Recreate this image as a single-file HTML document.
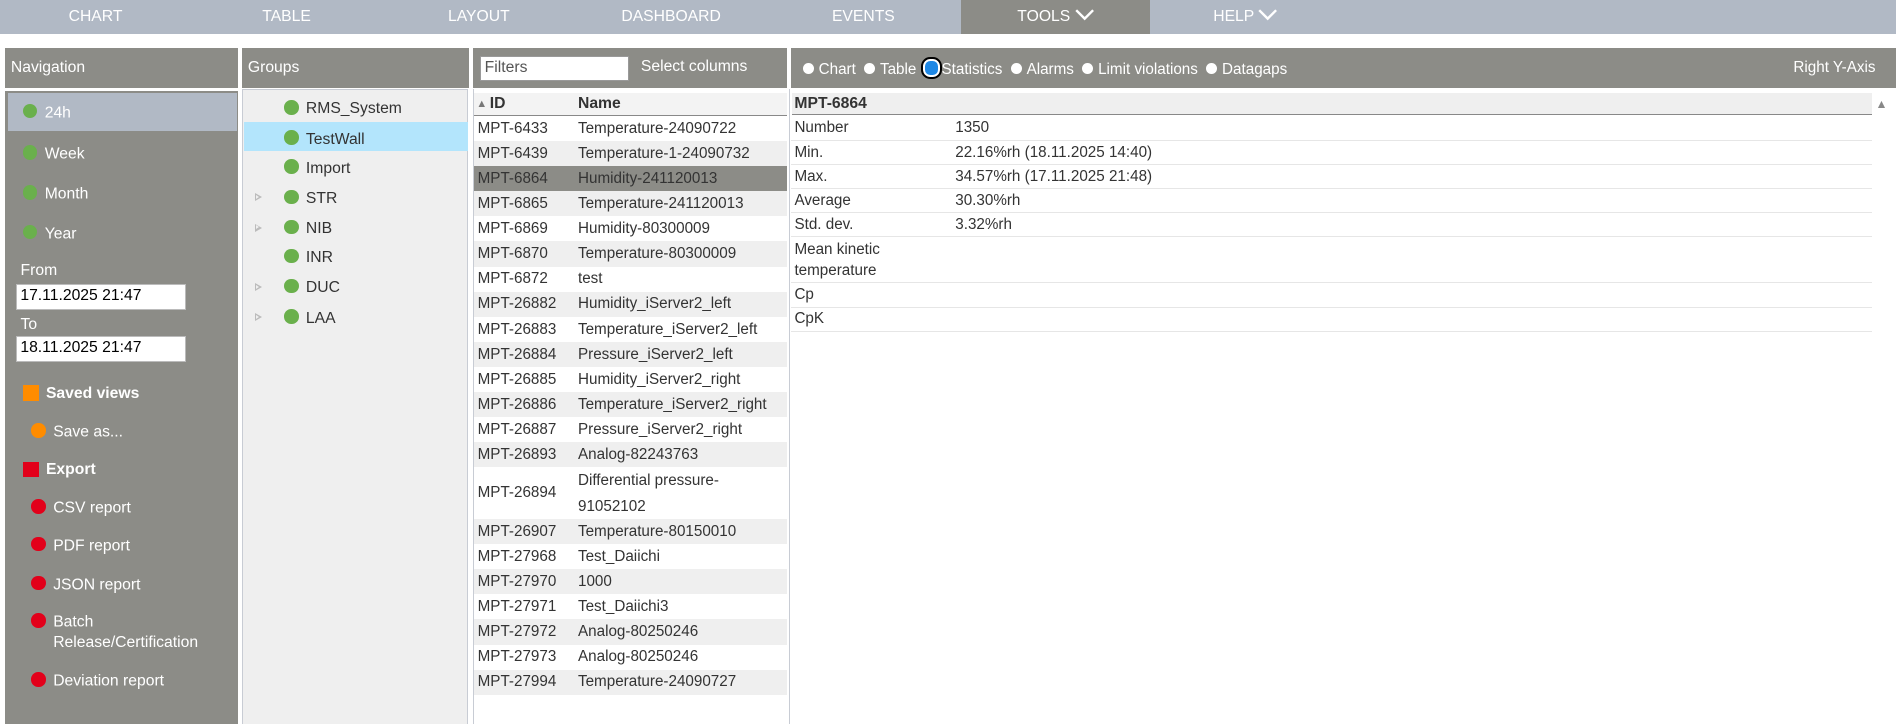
<!DOCTYPE html>
<html><head><meta charset="utf-8"><style>
html,body{margin:0;padding:0;background:#fff;overflow:hidden}
#w{zoom:1.2092;width:1568px;height:599px;position:relative;font-family:"Liberation Sans",sans-serif;font-size:13px;color:#333}
.a{position:absolute}
.nav{left:0;top:0;width:1568px;height:28px;background:#b1b9c5}
.nav div{position:absolute;top:0;height:28px;width:158px;text-align:center;line-height:28px;color:#fff;font-size:13px}
.hd{background:#8c8c87;color:#fff;font-size:13px}
.dot{display:inline-block;width:12px;height:12px;border-radius:50%;background:#6ab04c;vertical-align:-1px;margin-right:6px}
.rd{background:#e2001a}
.ni{position:absolute;left:19px;color:#fff;font-size:13px}
.gi{position:absolute;left:235px;font-size:13px;color:#333;line-height:24px}
.tri{position:absolute;left:211px;width:0;height:0;border-left:6px solid #bbb;border-top:4px solid transparent;border-bottom:4px solid transparent}
.tri:after{content:"";position:absolute;left:-5px;top:-2px;border-left:3px solid #efefef;border-top:2px solid transparent;border-bottom:2px solid transparent}
table{border-collapse:collapse}
.tb td{padding:1px 0 0 3px;height:20.75px;line-height:17px;font-size:12.6px;color:#333;vertical-align:middle;box-sizing:border-box}
.st td{height:20px;border-bottom:1px solid #e6e6e6;padding:1px 0 0 3px;font-size:12.6px;line-height:17px;box-sizing:border-box}
.rb{display:inline-block;width:9px;height:9px;border-radius:50%;background:#fff;margin-right:4px;vertical-align:0}
.inp{background:#fff;border:1px solid #bbb;color:#000;font-size:13px;line-height:18px;padding-left:3px;box-sizing:border-box}
</style></head><body><div id="w">
<div class="a nav">
<div style="left:0">CHART</div><div style="left:158px">TABLE</div><div style="left:317px">LAYOUT</div><div style="left:476px">DASHBOARD</div><div style="left:635px">EVENTS</div>
<div style="left:795px;width:156px;background:#8c8c87">TOOLS <svg width="16" height="10" viewBox="0 0 16 10" style="vertical-align:0"><path d="M1 1l7 7 7-7" stroke="#fff" stroke-width="2" fill="none"/></svg></div>
<div style="left:951px">HELP <svg width="16" height="10" viewBox="0 0 16 10"><path d="M1 1l7 7 7-7" stroke="#fff" stroke-width="2" fill="none"/></svg></div>
</div>

<div class="a hd" style="left:4px;top:40px;width:193px;height:559px"></div>
<div class="a" style="left:4px;top:73px;width:193px;height:2px;background:#fff"></div>
<div class="a" style="left:9px;top:49px;color:#fff">Navigation</div>
<div class="a" style="left:7px;top:77px;width:189px;height:31px;background:#b1b9c5"></div>
<div class="ni" style="top:86px"><span class="dot"></span>24h</div>
<div class="ni" style="top:120px"><span class="dot"></span>Week</div>
<div class="ni" style="top:153px"><span class="dot"></span>Month</div>
<div class="ni" style="top:186px"><span class="dot"></span>Year</div>
<div class="ni" style="left:17px;top:217px">From</div>
<div class="a inp" style="left:13px;top:235px;width:141px;height:21px">17.11.2025 21:47</div>
<div class="ni" style="left:17px;top:261px">To</div>
<div class="a inp" style="left:13px;top:278px;width:141px;height:21px">18.11.2025 21:47</div>
<div class="ni" style="top:318px;font-weight:bold"><span style="display:inline-block;width:13px;height:13px;background:#ff8c00;vertical-align:-3px;margin-right:6px"></span>Saved views</div>
<div class="ni" style="left:26px;top:350px"><span class="dot" style="background:#ff8c00"></span>Save as...</div>
<div class="ni" style="top:381px;font-weight:bold"><span style="display:inline-block;width:13px;height:13px;background:#e2001a;vertical-align:-3px;margin-right:6px"></span>Export</div>
<div class="ni" style="left:26px;top:413px"><span class="dot rd"></span>CSV report</div>
<div class="ni" style="left:26px;top:444px"><span class="dot rd"></span>PDF report</div>
<div class="ni" style="left:26px;top:476px"><span class="dot rd"></span>JSON report</div>
<div class="ni" style="left:26px;top:507px"><span class="dot rd"></span>Batch</div>
<div class="ni" style="left:44px;top:524px">Release/Certification</div>
<div class="ni" style="left:26px;top:556px"><span class="dot rd"></span>Deviation report</div>

<div class="a hd" style="left:200px;top:40px;width:188px;height:33px"></div>
<div class="a" style="left:205px;top:49px;color:#fff">Groups</div>
<div class="a" style="left:200px;top:74px;width:187px;height:525px;background:#efefef;border:1px solid #c8ccd4;border-bottom:none;box-sizing:border-box"></div>
<div class="a" style="left:202px;top:101px;width:185px;height:24px;background:#b3e5fc"></div>
<div class="gi" style="top:78px"><span class="dot"></span>RMS_System</div>
<div class="gi" style="top:103px"><span class="dot"></span>TestWall</div>
<div class="gi" style="top:127px"><span class="dot"></span>Import</div>
<div class="tri" style="top:160px"></div><div class="gi" style="top:152px"><span class="dot"></span>STR</div>
<div class="tri" style="top:185px"></div><div class="gi" style="top:177px"><span class="dot"></span>NIB</div>
<div class="gi" style="top:201px"><span class="dot"></span>INR</div>
<div class="tri" style="top:234px"></div><div class="gi" style="top:226px"><span class="dot"></span>DUC</div>
<div class="tri" style="top:259px"></div><div class="gi" style="top:251px"><span class="dot"></span>LAA</div>

<div class="a hd" style="left:391px;top:40px;width:260px;height:33px"></div>
<div class="a inp" style="left:397px;top:46px;width:123px;height:21px;color:#555;border-color:#999">Filters</div>
<div class="a" style="left:530px;top:48px;color:#fff">Select columns</div>
<div class="a" style="left:391px;top:74px;width:262px;height:525px;border-left:1px solid #c8ccd4;border-right:1px solid #c8ccd4;box-sizing:border-box"></div>
<div class="a" style="left:392px;top:77px;width:259px;height:18px;border-bottom:1px solid #888;background:#f3f3f3;font-weight:bold;font-size:13px;line-height:19px">
<span style="position:absolute;left:2px;font-size:9px;color:#777">&#9650;</span><span style="position:absolute;left:13px">ID</span><span style="position:absolute;left:86px">Name</span></div>
<table class="tb a" style="left:392px;top:96px;width:259px">
<col style="width:83px"><col>
<tr style="background:#fff"><td>MPT-6433</td><td>Temperature-24090722</td></tr>
<tr style="background:#efefef"><td>MPT-6439</td><td>Temperature-1-24090732</td></tr>
<tr style="background:#8c8c87"><td>MPT-6864</td><td>Humidity-241120013</td></tr>
<tr style="background:#efefef"><td>MPT-6865</td><td>Temperature-241120013</td></tr>
<tr style="background:#fff"><td>MPT-6869</td><td>Humidity-80300009</td></tr>
<tr style="background:#efefef"><td>MPT-6870</td><td>Temperature-80300009</td></tr>
<tr style="background:#fff"><td>MPT-6872</td><td>test</td></tr>
<tr style="background:#efefef"><td>MPT-26882</td><td>Humidity_iServer2_left</td></tr>
<tr style="background:#fff"><td>MPT-26883</td><td>Temperature_iServer2_left</td></tr>
<tr style="background:#efefef"><td>MPT-26884</td><td>Pressure_iServer2_left</td></tr>
<tr style="background:#fff"><td>MPT-26885</td><td>Humidity_iServer2_right</td></tr>
<tr style="background:#efefef"><td>MPT-26886</td><td>Temperature_iServer2_right</td></tr>
<tr style="background:#fff"><td>MPT-26887</td><td>Pressure_iServer2_right</td></tr>
<tr style="background:#efefef"><td>MPT-26893</td><td>Analog-82243763</td></tr>
<tr style="background:#fff"><td style="height:39px">MPT-26894</td><td style="line-height:21px">Differential pressure-<br>91052102</td></tr>
<tr style="background:#efefef"><td>MPT-26907</td><td>Temperature-80150010</td></tr>
<tr style="background:#fff"><td>MPT-27968</td><td>Test_Daiichi</td></tr>
<tr style="background:#efefef"><td>MPT-27970</td><td>1000</td></tr>
<tr style="background:#fff"><td>MPT-27971</td><td>Test_Daiichi3</td></tr>
<tr style="background:#efefef"><td>MPT-27972</td><td>Analog-80250246</td></tr>
<tr style="background:#fff"><td>MPT-27973</td><td>Analog-80250246</td></tr>
<tr style="background:#efefef"><td>MPT-27994</td><td>Temperature-24090727</td></tr>
</table>

<div class="a hd" style="left:654px;top:40px;width:914px;height:33px"></div>
<div class="a" style="left:664px;top:49px;color:#fff;white-space:nowrap;font-size:12.6px">
<span class="rb"></span>Chart&nbsp; <span class="rb"></span>Table <span style="display:inline-block;width:11px;height:11px;border-radius:50%;background:#1e88e5;border:2px solid #fff;outline:2px solid #000;margin:0 1px 0 2px;vertical-align:-2px;border-radius:6px"></span>Statistics&nbsp; <span class="rb"></span>Alarms&nbsp; <span class="rb"></span>Limit violations&nbsp; <span class="rb"></span>Datagaps</div>
<div class="a" style="right:17px;top:49px;color:#fff;font-size:12.6px">Right Y-Axis</div>
<div class="a" style="left:655px;top:77px;width:893px;height:18px;background:#efefef;border-bottom:1px solid #888;font-weight:bold;line-height:19px;padding-left:2px;box-sizing:border-box">MPT-6864</div>
<div class="a" style="left:1551px;top:80px;font-size:10px;color:#888">&#9650;</div>
<table class="st a" style="left:654px;top:96px;width:894px">
<col style="width:133px"><col>
<tr><td>Number</td><td>1350</td></tr>
<tr><td>Min.</td><td>22.16%rh (18.11.2025 14:40)</td></tr>
<tr><td>Max.</td><td>34.57%rh (17.11.2025 21:48)</td></tr>
<tr><td>Average</td><td>30.30%rh</td></tr>
<tr><td>Std. dev.</td><td>3.32%rh</td></tr>
<tr><td style="height:38px">Mean kinetic<br>temperature</td><td></td></tr>
<tr><td>Cp</td><td></td></tr>
<tr><td>CpK</td><td></td></tr>
</table>
</div></body></html>
